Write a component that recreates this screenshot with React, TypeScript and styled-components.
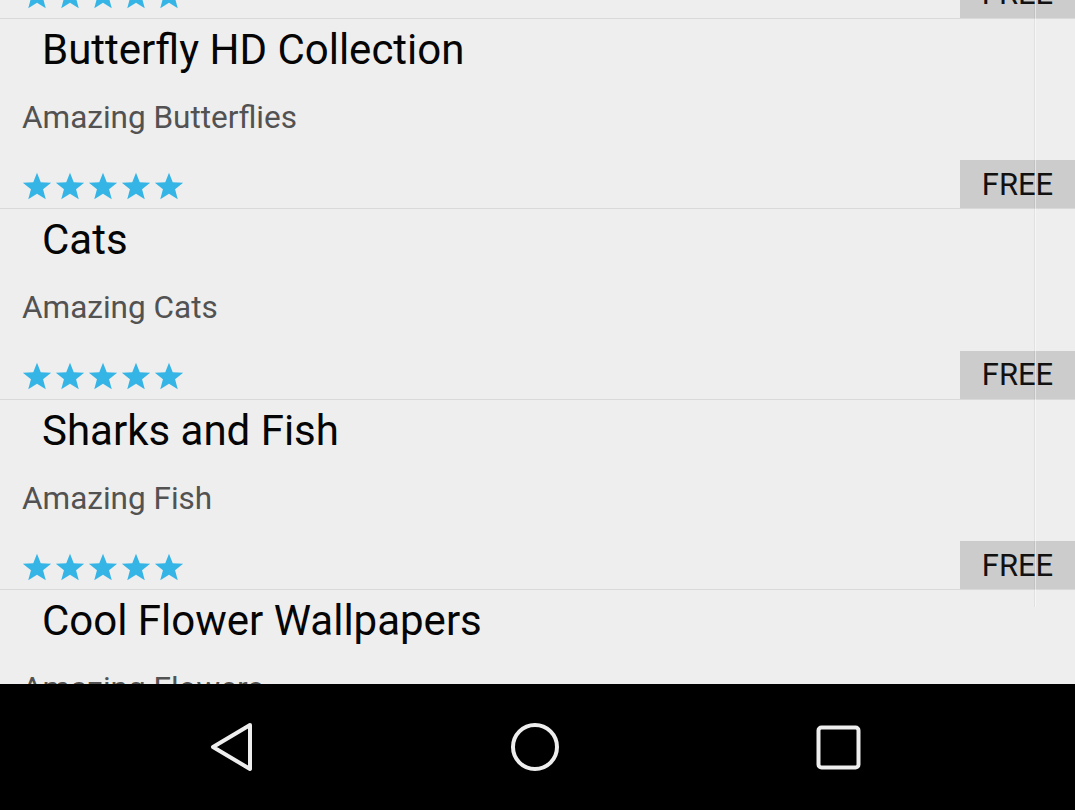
import React from "react";
import styled, { createGlobalStyle } from "styled-components";

const GlobalStyle = createGlobalStyle`
  html, body { margin: 0; padding: 0; }
  body {
    background: #eeeeee;
    font-family: Roboto, "Noto Sans", "Liberation Sans", sans-serif;
  }
  * { box-sizing: border-box; }
`;

const Screen = styled.div`
  width: 1075px;
  height: 810px;
  display: flex;
  flex-direction: column;
  background: #eeeeee;
`;

const Viewport = styled.div`
  flex: 1;
  position: relative;
  overflow: hidden;
`;

const List = styled.div`
  display: flex;
  flex-direction: column;
  margin-top: -172px;
`;

const Item = styled.div`
  display: flex;
  flex-direction: column;
  height: 190.5px;
  border-bottom: 1px solid #d9d9d9;
`;

const Title = styled.div`
  padding: 6px 0 0 42px;
  font-size: 42px;
  line-height: 49px;
  color: #050505;
  white-space: nowrap;
`;

const Subtitle = styled.div`
  margin-top: 25px;
  padding-left: 22px;
  font-size: 31.5px;
  line-height: 37px;
  color: #525252;
  white-space: nowrap;
`;

const BottomRow = styled.div`
  margin-top: auto;
  display: flex;
  align-items: center;
  justify-content: space-between;
  height: 48px;
`;

const Stars = styled.div`
  display: flex;
  gap: 3px;
  padding: 4px 0 0 22px;
`;

const Price = styled.div`
  width: 115px;
  height: 48px;
  background: #cccccc;
  color: #111111;
  font-size: 31px;
  display: flex;
  align-items: center;
  justify-content: center;
`;

const ScrollLine = styled.div`
  position: absolute;
  left: 1034px;
  top: 0;
  width: 2px;
  height: 607px;
  border-left: 1px solid rgba(0, 0, 0, 0.05);
  border-right: 1px solid rgba(255, 255, 255, 0.5);
  pointer-events: none;
`;

const NavBar = styled.div`
  height: 126px;
  flex-shrink: 0;
  background: #000000;
  display: flex;
  align-items: center;
  padding-left: 172px;
  gap: 183px;
`;

const NavButton = styled.div`
  width: 120px;
  height: 60px;
  display: flex;
  align-items: center;
  justify-content: center;
`;

const Star = () => (
  <svg width="30" height="29" viewBox="0 0 24 23">
    <path
      d="M12 0.4l3 7.65 8.3 0.5-6.45 5.2 2.15 8L12 17.3l-7 4.45 2.15-8-6.45-5.2 8.3-0.5z"
      fill="#35b5e6"
    />
  </svg>
);

const items = [
  { title: "Butterfly Wallpapers", sub: "Amazing Butterflies" },
  { title: "Butterfly HD Collection", sub: "Amazing Butterflies" },
  { title: "Cats", sub: "Amazing Cats" },
  { title: "Sharks and Fish", sub: "Amazing Fish" },
  { title: "Cool Flower Wallpapers", sub: "Amazing Flowers" },
];

export default function App() {
  return (
    <>
      <GlobalStyle />
      <Screen>
        <Viewport>
          <List>
            {items.map((it, i) => (
              <Item key={i}>
                <Title>{it.title}</Title>
                <Subtitle>{it.sub}</Subtitle>
                <BottomRow>
                  <Stars>
                    {[0, 1, 2, 3, 4].map((s) => (
                      <Star key={s} />
                    ))}
                  </Stars>
                  <Price>FREE</Price>
                </BottomRow>
              </Item>
            ))}
          </List>
          <ScrollLine />
        </Viewport>
        <NavBar>
          <NavButton>
            <svg width="48" height="52" viewBox="0 0 48 52">
              <path
                d="M42 4 L5 26 L42 48 Z"
                fill="none"
                stroke="#eeeeee"
                strokeWidth="4"
                strokeLinejoin="round"
              />
            </svg>
          </NavButton>
          <NavButton>
            <svg width="52" height="52" viewBox="0 0 52 52">
              <circle cx="26" cy="26" r="22" fill="none" stroke="#eeeeee" strokeWidth="4" />
            </svg>
          </NavButton>
          <NavButton>
            <svg width="47" height="47" viewBox="0 0 47 47">
              <rect x="3.5" y="3.5" width="40" height="40" rx="3" fill="none" stroke="#eeeeee" strokeWidth="4" />
            </svg>
          </NavButton>
        </NavBar>
      </Screen>
    </>
  );
}
